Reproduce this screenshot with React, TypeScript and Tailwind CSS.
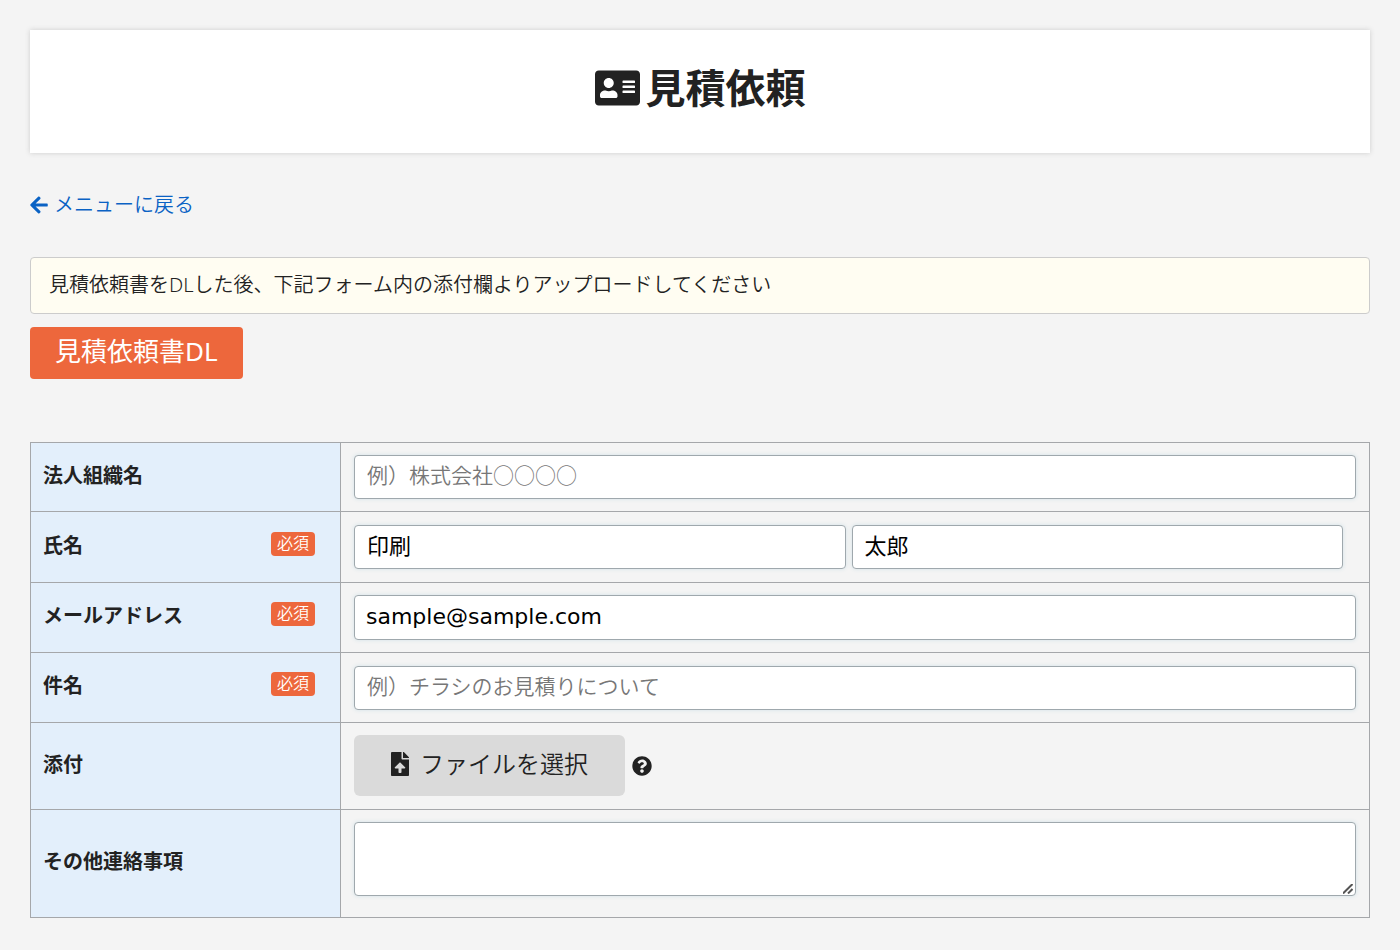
import type { ReactNode } from "react";
import { FaAddressCard, FaArrowLeft, FaFileUpload, FaQuestionCircle } from "react-icons/fa";

interface RowProps {
  label: string;
  htmlFor: string;
  height: string;
  required?: boolean;
  children: ReactNode;
}

const fieldClass =
  "block h-11 rounded-[4px] border border-[#9fa8ad] bg-white px-3 pb-[6px] shadow-[0_0_4px_#d3e3e8] placeholder:text-[21px] placeholder:font-[350] placeholder:text-[#777]";

function FormRow({ label, htmlFor, height, required, children }: RowProps) {
  return (
    <tr className={height}>
      <th scope="row" className="w-[310px] border border-[#a5a7aa] bg-[#e3effb] px-3 text-left align-middle">
        <div className="flex items-start justify-between pr-[13px] pb-[3px]">
          <label htmlFor={htmlFor} className="text-xl font-bold">{label}</label>
          {required && (
            <span className="rounded-[4px] bg-[#ed673c] px-[6px] pb-[2px] text-base leading-[22px] font-[350] text-white">必須</span>
          )}
        </div>
      </th>
      <td className="border border-[#a5a7aa] px-[13px] align-middle">{children}</td>
    </tr>
  );
}

export default function App() {
  return (
    <div className="min-h-screen bg-[#f4f4f4] p-[30px] font-['Noto_Sans','Noto_Sans_CJK_JP',sans-serif] text-[#222]">
      <header className="flex h-[123px] items-center justify-center bg-white pb-[7px] shadow-[0_0_5px_#ccc]">
        <h1 className="flex items-center gap-[6px] text-[40px] leading-[60px] font-bold">
          <FaAddressCard className="h-10 w-[45px]" />
          見積依頼
        </h1>
      </header>

      <a href="#menu" className="mt-9 flex w-fit items-center gap-[6px] pt-px text-xl leading-[30px] font-[350] text-[#0a62c4]">
        <FaArrowLeft className="h-5 w-[18px]" />
        メニューに戻る
      </a>

      <p className="mt-[37px] rounded-[4px] border border-[#ccc] bg-[#fffdf2] px-[18px] pt-3 pb-[13px] text-xl leading-[30px] font-[350]">
        見積依頼書をDLした後、下記フォーム内の添付欄よりアップロードしてください
      </p>

      <button type="button" className="mt-[13px] block h-[52px] rounded-[4px] bg-[#ed673c] px-[25px] pb-1 text-[26px] leading-9 text-white">
        見積依頼書DL
      </button>

      <form className="mt-[63px]">
        <table className="w-full table-fixed border-collapse">
          <tbody>
            <FormRow label="法人組織名" htmlFor="company" height="h-[69px]">
              <input id="company" type="text" placeholder="例）株式会社○○○○" className={`${fieldClass} w-full text-[22px]`} />
            </FormRow>
            <FormRow label="氏名" htmlFor="family" height="h-[71px]" required>
              <div className="flex gap-[6px] pr-[13px]">
                <input id="family" type="text" aria-label="姓" defaultValue="印刷" className={`${fieldClass} w-full text-[22px] text-black`} />
                <input id="given" type="text" aria-label="名" defaultValue="太郎" className={`${fieldClass} w-full text-[22px] text-black`} />
              </div>
            </FormRow>
            <FormRow label="メールアドレス" htmlFor="email" height="h-[70px]" required>
              <input id="email" type="email" defaultValue="sample@sample.com" className="block h-[45px] w-full rounded-[4px] border border-[#9fa8ad] bg-white px-[11px] pb-[2px] font-['DejaVu_Sans',sans-serif] text-[22px] text-black shadow-[0_0_4px_#d3e3e8]" />
            </FormRow>
            <FormRow label="件名" htmlFor="subject" height="h-[70px]" required>
              <input id="subject" type="text" placeholder="例）チラシのお見積りについて" className={`${fieldClass} w-full text-[22px]`} />
            </FormRow>
            <FormRow label="添付" htmlFor="attachment" height="h-[87px]">
              <div className="flex items-center gap-[7px] pb-px">
                <button id="attachment" type="button" className="flex h-[61px] items-center gap-[10px] rounded-md bg-[#dadada] pr-[37px] pb-1 pl-9 text-2xl font-[350]">
                  <FaFileUpload className="h-6 w-5" />
                  ファイルを選択
                </button>
                <button type="button" aria-label="ヘルプ">
                  <FaQuestionCircle className="size-5" />
                </button>
              </div>
            </FormRow>
            <FormRow label="その他連絡事項" htmlFor="note" height="h-[108px]">
              <div className="relative mb-[10px]">
                <textarea id="note" className="block h-[74px] w-full resize rounded-[4px] border border-[#9fa8ad] bg-white p-3 text-[22px] shadow-[0_0_4px_#d3e3e8] [&::-webkit-resizer]:hidden" />
                <svg viewBox="0 0 10 10" className="pointer-events-none absolute right-[3px] bottom-[2px] size-[10px]" fill="none" stroke="#555" strokeWidth="2">
                  <path d="M0 9.5 9.5 0M5 9.5 9.5 5" />
                </svg>
              </div>
            </FormRow>
          </tbody>
        </table>
      </form>
    </div>
  );
}
